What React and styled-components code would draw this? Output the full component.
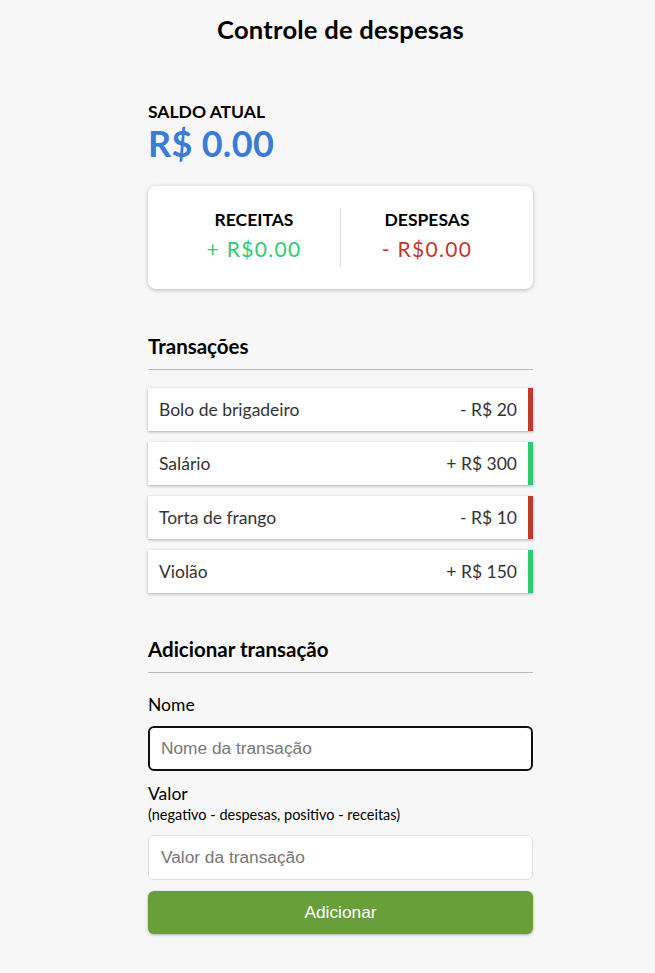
import React, { useState } from 'react';
import styled, { createGlobalStyle } from 'styled-components';

const GlobalStyle = createGlobalStyle`
  * { box-sizing: border-box; }
  body {
    margin: 0;
    padding: 0 0 0 26px;
    background-color: #f7f7f7;
    font-family: 'Lato', 'Liberation Sans', sans-serif;
    color: #000;
  }
`;

const Container = styled.div`
  width: 385px;
  margin: 0 auto;
  padding-bottom: 38px;
`;

const Title = styled.h2`
  margin: 0;
  padding-top: 14px;
  font-size: 25.6px;
  font-weight: 700;
  text-align: center;
  letter-spacing: 0.2px;
`;

const BalanceLabel = styled.h4`
  margin: 56px 0 0 0;
  font-size: 17.5px;
  font-weight: 700;
  line-height: 24px;
`;

const Balance = styled.h1`
  margin: 0;
  font-size: 36px;
  font-weight: 700;
  line-height: 38px;
  color: #3a7bd5;
  letter-spacing: 0.3px;
`;

const SummaryCard = styled.div`
  margin-top: 24px;
  display: flex;
  justify-content: space-between;
  align-items: center;
  background-color: #fff;
  border-radius: 8px;
  box-shadow: 0 1px 4px rgba(0, 0, 0, 0.25);
  padding: 22px 20px;
  height: 103px;
`;

const SummaryBox = styled.div`
  flex: 1;
  text-align: center;
  align-self: stretch;
  display: flex;
  flex-direction: column;
  justify-content: center;
  padding-bottom: 6px;
  & + & {
    border-left: 1px solid #dedede;
  }
`;

const SummaryTitle = styled.h4`
  margin: 0;
  font-size: 17.5px;
  font-weight: 700;
  line-height: 22px;
`;

const Money = styled.p`
  margin: 6px 0 0 0;
  font-size: 21px;
  letter-spacing: 1.3px;
  line-height: 24px;
  color: ${({ plus }) => (plus ? '#2ecc71' : '#c0392b')};
`;

const SectionTitle = styled.h3`
  margin: ${({ tight }) => (tight ? '43px' : '44px')} 0 0 0;
  font-size: 20.5px;
  font-weight: 700;
  line-height: 26px;
  padding-bottom: 10px;
  border-bottom: 1px solid #bbb;
`;

const List = styled.ul`
  list-style: none;
  margin: 18px 0 0 0;
  padding: 0;
  display: flex;
  flex-direction: column;
  gap: 11px;
`;

const Item = styled.li`
  display: flex;
  justify-content: space-between;
  align-items: center;
  height: 43px;
  background-color: #fff;
  box-shadow: 0 1px 3px rgba(0, 0, 0, 0.3);
  padding: 0 11px;
  font-size: 17.5px;
  color: #333;
  border-right: 5px solid ${({ plus }) => (plus ? '#2ecc71' : '#c0392b')};
`;

const Form = styled.form`
  display: flex;
  flex-direction: column;
`;

const FormControl = styled.div`
  display: flex;
  flex-direction: column;
`;

const Label = styled.label`
  margin-top: ${({ first }) => (first ? '21px' : '12px')};
  font-size: 17.5px;
  line-height: 22px;
`;

const Hint = styled.span`
  margin-top: 1px;
  font-size: 14.5px;
  line-height: 18px;
`;

const Input = styled.input`
  margin-top: ${({ focused }) => (focused ? '10px' : '11px')};
  height: 45px;
  width: 100%;
  border: ${({ focused }) => (focused ? '2px solid #111' : '1px solid #dedede')};
  border-radius: 6px;
  padding: 0 ${({ focused }) => (focused ? '11px' : '12px')};
  font-family: 'Liberation Sans', Arial, sans-serif;
  font-size: 17.3px;
  background: #fff;
  color: #333;
  outline: none;
  &::placeholder {
    color: #777;
  }
`;

const AddButton = styled.button`
  margin-top: 11px;
  height: 43px;
  width: 100%;
  border: none;
  border-radius: 6px;
  background-color: #689f38;
  color: #fff;
  font-family: 'Liberation Sans', Arial, sans-serif;
  font-size: 17.3px;
  box-shadow: 0 1px 3px rgba(0, 0, 0, 0.3);
  cursor: pointer;
`;

const transactions = [
  { id: 1, name: 'Bolo de brigadeiro', amount: -20 },
  { id: 2, name: 'Salário', amount: 300 },
  { id: 3, name: 'Torta de frango', amount: -10 },
  { id: 4, name: 'Violão', amount: 150 },
];

export default function App() {
  const [name, setName] = useState('');
  const [value, setValue] = useState('');

  return (
    <>
      <GlobalStyle />
      <Container>
        <Title>Controle de despesas</Title>
        <BalanceLabel>SALDO ATUAL</BalanceLabel>
        <Balance>R$ 0.00</Balance>

        <SummaryCard>
          <SummaryBox>
            <SummaryTitle>RECEITAS</SummaryTitle>
            <Money plus>+ R$0.00</Money>
          </SummaryBox>
          <SummaryBox>
            <SummaryTitle>DESPESAS</SummaryTitle>
            <Money>- R$0.00</Money>
          </SummaryBox>
        </SummaryCard>

        <SectionTitle>Transações</SectionTitle>
        <List>
          {transactions.map((t) => (
            <Item key={t.id} plus={t.amount > 0}>
              {t.name}
              <span>
                {t.amount > 0 ? '+' : '-'} R$ {Math.abs(t.amount)}
              </span>
            </Item>
          ))}
        </List>

        <SectionTitle tight>Adicionar transação</SectionTitle>
        <Form onSubmit={(e) => e.preventDefault()}>
          <FormControl>
            <Label first htmlFor="text">Nome</Label>
            <Input
              id="text"
              focused
              placeholder="Nome da transação"
              value={name}
              onChange={(e) => setName(e.target.value)}
            />
          </FormControl>
          <FormControl>
            <Label htmlFor="amount">Valor</Label>
            <Hint>(negativo - despesas, positivo - receitas)</Hint>
            <Input
              id="amount"
              placeholder="Valor da transação"
              value={value}
              onChange={(e) => setValue(e.target.value)}
            />
          </FormControl>
          <AddButton type="submit">Adicionar</AddButton>
        </Form>
      </Container>
    </>
  );
}
